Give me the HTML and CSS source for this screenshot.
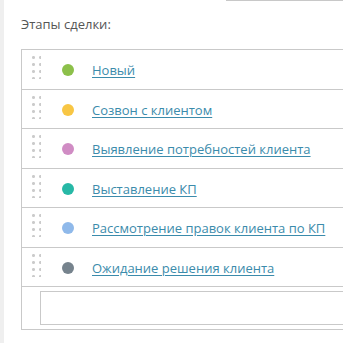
FILE: index.html
```html
<!DOCTYPE html>
<html lang="ru">
<head>
<meta charset="utf-8">
<link rel="stylesheet" href="styles.css">
</head>
<body>
<div class="page">
  <div class="side"></div>
  <div class="main">
    <div class="topline"></div>
    <div class="title">Этапы сделки:</div>
    <div class="list">
      <div class="row"><span class="handle"></span><span class="dot green"></span><a class="name" href="#">Новый</a></div>
      <div class="row"><span class="handle"></span><span class="dot yellow"></span><a class="name" href="#">Созвон с клиентом</a></div>
      <div class="row"><span class="handle"></span><span class="dot pink"></span><a class="name" href="#">Выявление потребностей клиента</a></div>
      <div class="row"><span class="handle"></span><span class="dot teal"></span><a class="name" href="#">Выставление КП</a></div>
      <div class="row"><span class="handle"></span><span class="dot blue"></span><a class="name" href="#">Рассмотрение правок клиента по КП</a></div>
      <div class="row"><span class="handle"></span><span class="dot slate"></span><a class="name" href="#">Ожидание решения клиента</a></div>
      <div class="row last"><div class="input"></div></div>
    </div>
  </div>
</div>
</body>
</html>
```
FILE: styles.css
```css
html, body { margin: 0; padding: 0; background: #fff; }
body { width: 343px; height: 343px; overflow: hidden; font-family: "Open Sans", "Noto Sans", sans-serif; }
.page { display: flex; height: 343px; overflow: hidden; }
.side { width: 4px; flex: none; background: #efefef; }
.main { flex: 1; position: relative; padding-left: 17px; overflow: hidden; }
.topline { position: absolute; top: 0; left: 222px; width: 200px; height: 1px; background: #c8c8c8; }
.title { font-size: 13px; color: #555; padding-top: 14px; height: 20px; line-height: 20px; margin-bottom: 15px; }
.list { width: 360px; border: 1px solid #c9c9c9; }
.row { height: 38.5px; border-top: 1px solid #c9c9c9; display: flex; align-items: center; }
.row:first-child { border-top: none; }
.handle { width: 9px; height: 24px; margin-left: 10px; margin-right: 21px; flex: none;
  background-image: radial-gradient(circle, #cbcbcb 1.3px, transparent 1.6px);
  background-size: 7px 7px; background-position: -2px -1px; margin-top: -4px; }
.dot { width: 12px; height: 12px; border-radius: 50%; flex: none; margin-right: 18px; margin-top: 2px; }
.green { background: #8cc04a; }
.yellow { background: #f8c644; }
.pink { background: #d08cc4; }
.teal { background: #27b8a6; }
.blue { background: #8fb9ea; }
.slate { background: #76838d; }
.name { font-size: 13px; color: #3b8bab; text-decoration: underline; text-underline-offset: 2px; margin-top: 2px; white-space: nowrap; }
.row.last { height: 42px; align-items: center; }
.input { margin-left: 18px; width: 340px; height: 32px; border: 1px solid #c9c9c9; flex: none; }
```
